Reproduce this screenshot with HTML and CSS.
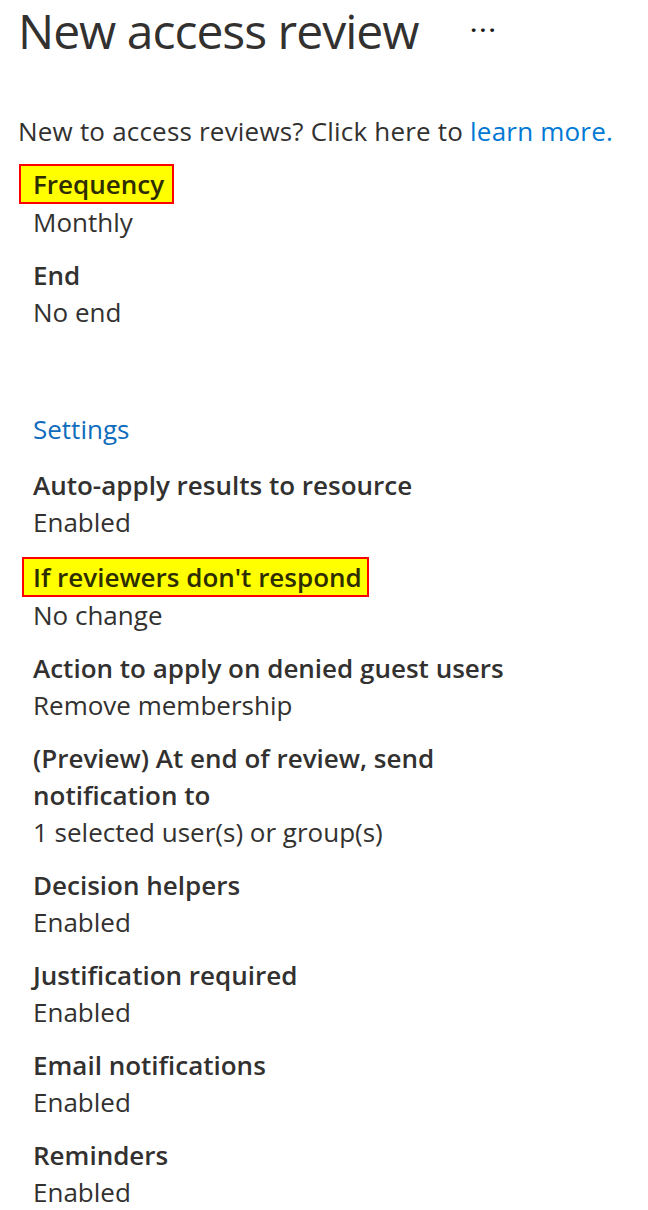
FILE: index.html
```html
<!DOCTYPE html>
<html lang="en">
<head>
  <meta charset="UTF-8" />
  <title>New access review</title>
  <link rel="stylesheet" href="styles.css">
</head>
<body>

  <header class="page-header">
    <h1>New access review</h1>
    <span class="more">&middot;&middot;&middot;</span>
  </header>

  <p class="intro">New to access reviews? Click here to <a href="#">learn more.</a></p>

  <div class="summary">
    <div class="field">
      <div class="label"><span class="mark mark-freq">Frequency</span></div>
      <div class="value">Monthly</div>
    </div>
    <div class="field">
      <div class="label">End</div>
      <div class="value">No end</div>
    </div>

    <h2 class="section">Settings</h2>

    <div class="field">
      <div class="label">Auto-apply results to resource</div>
      <div class="value">Enabled</div>
    </div>
    <div class="field">
      <div class="label"><span class="mark mark-resp">If reviewers don't respond</span></div>
      <div class="value">No change</div>
    </div>
    <div class="field">
      <div class="label">Action to apply on denied guest users</div>
      <div class="value">Remove membership</div>
    </div>
    <div class="field">
      <div class="label">(Preview) At end of review, send<br>notification to</div>
      <div class="value">1 selected user(s) or group(s)</div>
    </div>
    <div class="field">
      <div class="label">Decision helpers</div>
      <div class="value">Enabled</div>
    </div>
    <div class="field">
      <div class="label">Justification required</div>
      <div class="value">Enabled</div>
    </div>
    <div class="field">
      <div class="label">Email notifications</div>
      <div class="value">Enabled</div>
    </div>
    <div class="field">
      <div class="label">Reminders</div>
      <div class="value">Enabled</div>
    </div>
  </div>

</body>
</html>
```

FILE: styles.css
```css
body {
  font-family: 'Open Sans', 'Noto Sans', sans-serif;
  margin: 0;
  padding: 0 0 0 18px;
  background-color: #ffffff;
  color: #323130;
}

.page-header {
  display: flex;
  align-items: center;
  height: 62px;
}

.page-header h1 {
  margin: 0;
  font-size: 48px;
  font-weight: 500;
  letter-spacing: -1px;
  line-height: 62px;
}

.more {
  margin-left: 52px;
  margin-top: -4px;
  font-size: 22px;
  font-weight: 700;
  letter-spacing: 3px;
  color: #1b1a19;
}

.intro {
  margin: 51px 0 0;
  font-size: 26px;
  line-height: 37px;
  letter-spacing: 0.2px;
}

.intro a {
  color: #0078d4;
  text-decoration: none;
}

.summary {
  padding-left: 15px;
  margin-top: 14px;
}

.field {
  margin-bottom: 16px;
  font-size: 26px;
  line-height: 37px;
}

.label {
  font-weight: 600;
}

.value {
  font-weight: 400;
}

.mark {
  display: inline-block;
  background-color: #ffff00;
  border: 2px solid #ff0000;
  color: #2e2d00;
  line-height: 36px;
}

.mark-freq {
  margin-left: -14px;
  padding: 0 8px 0 12px;
}

.mark-resp {
  margin-left: -11px;
  padding: 0 5px 0 9px;
}

.section {
  margin: 80px 0 19px;
  font-size: 26px;
  font-weight: 400;
  line-height: 37px;
  color: #0f6cbd;
}
```
